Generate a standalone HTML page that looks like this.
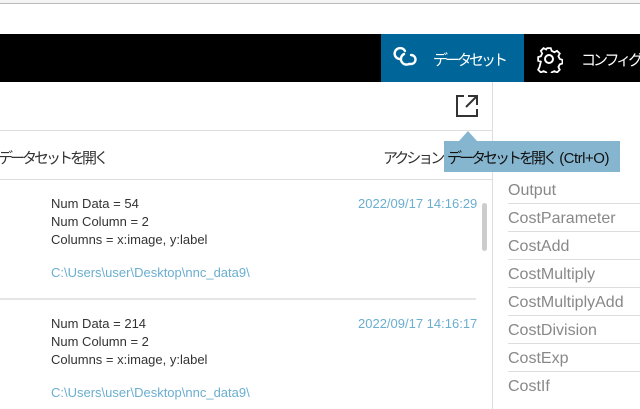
<!DOCTYPE html>
<html><head><meta charset="utf-8"><style>
body{margin:0;width:640px;height:409px;overflow:hidden;background:#fff;position:relative;font-family:"Liberation Sans","Noto Sans CJK JP",sans-serif;}
.a{position:absolute;}
.t{font-size:13px;color:#333;white-space:nowrap;}
.j{letter-spacing:-3px;}
.r{position:absolute;left:508px;font-size:16px;color:#888;white-space:nowrap;}
.sep{position:absolute;left:508px;width:132px;height:1px;background:#ddd;}
</style></head><body>
<div class="a" style="left:0;top:0;width:640px;height:3px;background:#f4f4f4;border-bottom:1px solid #bbb"></div>
<div class="a" style="left:0;top:34px;width:640px;height:48px;background:#000"></div>
<div class="a" style="left:381px;top:34px;width:143px;height:48px;background:#006699"></div>
<svg class="a" style="left:390px;top:45px" width="30" height="26" viewBox="0 0 30 26"><g fill="none" stroke="#fff" stroke-width="2.4" stroke-linecap="round"><path d="M11 14 A5.5 5.5 0 1 1 15 6"/><path d="M14 9 A5.5 5.5 0 1 0 19 19 L21 19 A4.5 4.5 0 0 0 21 10"/></g></svg>
<div class="a t j" style="left:433px;top:49px;color:#fff;font-size:15px">データセット</div>
<svg class="a" style="left:535px;top:45px" width="28" height="28" viewBox="0 0 28 28"><g fill="none" stroke="#fff" stroke-width="2"><path d="M12 2h4l1 3 3 1.5 3-1.5 3 3-1.5 3 1.5 3 3 1v4l-3 1-1.5 3 1.5 3-3 3-3-1.5-3 1.5-1 3h-4l-1-3-3-1.5-3 1.5-3-3 1.5-3L5 17l-3-1v-4l3-1 1.5-3L5 5l3-3 3 1.5z" transform="scale(.9) translate(1.5 1.5)"/><circle cx="14" cy="14" r="4"/></g></svg>
<div class="a t j" style="left:581px;top:49px;color:#fff;font-size:15px">コンフィグ</div>
<div class="a" style="left:492px;top:82px;width:1px;height:327px;background:#ddd"></div>
<svg class="a" style="left:455px;top:94px" width="26" height="24" viewBox="0 0 26 24"><g fill="none" stroke="#333" stroke-width="2"><path d="M9 2H2v20h20v-7"/><path d="M13 2h9v9M22 2L11 13"/></g></svg>
<div class="a" style="left:0;top:130px;width:492px;height:1px;background:#ddd"></div>
<div class="a" style="left:0;top:179px;width:492px;height:1px;background:#ddd"></div>
<div class="a t j" style="left:-2px;top:147px;font-size:15px">データセットを開く</div>
<div class="a t j" style="left:383px;top:147px;font-size:15px">アクション</div>
<div class="a" style="left:444px;top:141px;width:176px;height:31px;background:#86b6cf"></div>
<div class="a" style="left:459px;top:131px;width:0;height:0;border-left:9px solid transparent;border-right:9px solid transparent;border-bottom:10px solid #86b6cf"></div>
<div class="a t" style="left:447px;top:147px;font-size:15px;color:#111"><span class="j">データセットを開く</span> <span style="letter-spacing:-0.5px">(Ctrl+O)</span></div>
<div class="a t" style="left:51px;top:196px">Num Data = 54</div>
<div class="a t" style="left:51px;top:214px">Num Column = 2</div>
<div class="a t" style="left:51px;top:232px">Columns = x:image, y:label</div>
<div class="a t" style="left:51px;top:265px;color:#6aaed0">C:\Users\user\Desktop\nnc_data9\</div>
<div class="a t" style="left:358px;top:196px;color:#6aaed0">2022/09/17 14:16:29</div>
<div class="a" style="left:482px;top:203px;width:5px;height:48px;border-radius:3px;background:#ccc"></div>
<div class="a" style="left:0;top:298px;width:476px;height:2px;background:#e6e6e6"></div>
<div class="a t" style="left:51px;top:316px">Num Data = 214</div>
<div class="a t" style="left:51px;top:334px">Num Column = 2</div>
<div class="a t" style="left:51px;top:352px">Columns = x:image, y:label</div>
<div class="a t" style="left:51px;top:385px;color:#6aaed0">C:\Users\user\Desktop\nnc_data9\</div>
<div class="a t" style="left:358px;top:316px;color:#6aaed0">2022/09/17 14:16:17</div>
<div class="r" style="top:182px">Output</div>
<div class="sep" style="top:203px"></div>
<div class="r" style="top:210px">CostParameter</div>
<div class="sep" style="top:231px"></div>
<div class="r" style="top:238px">CostAdd</div>
<div class="sep" style="top:259px"></div>
<div class="r" style="top:266px">CostMultiply</div>
<div class="sep" style="top:287px"></div>
<div class="r" style="top:294px">CostMultiplyAdd</div>
<div class="sep" style="top:315px"></div>
<div class="r" style="top:322px">CostDivision</div>
<div class="sep" style="top:343px"></div>
<div class="r" style="top:350px">CostExp</div>
<div class="sep" style="top:371px"></div>
<div class="r" style="top:378px">CostIf</div>
</body></html>
